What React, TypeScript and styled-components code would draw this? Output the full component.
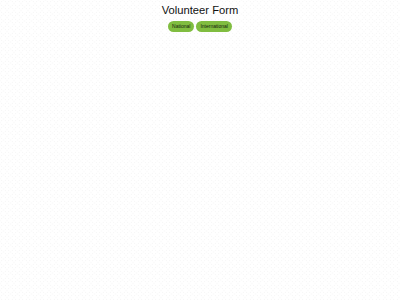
import styled, { createGlobalStyle } from 'styled-components';

const GlobalStyle = createGlobalStyle`
  html, body {
    margin: 0;
    padding: 0;
    height: 100%;
  }
  body {
    font-family: 'Liberation Sans', Arial, sans-serif;
    background-color: #ffffff;
    background-image: radial-gradient(circle at 50% 50%, transparent 2.2px, #f3f3f3 2.6px, transparent 3.2px);
    background-size: 7px 7px;
  }
`;

const Page = styled.main`
  display: flex;
  flex-direction: column;
  align-items: center;
  min-height: 300px;
  padding-top: 2px;
`;

const Title = styled.h1`
  margin: 0;
  font-family: 'Liberation Sans', Arial, sans-serif;
  font-size: 11.2px;
  font-weight: 400;
  color: #111;
  line-height: 17px;
`;

const ButtonRow = styled.div`
  display: flex;
  gap: 2px;
  margin-top: 2px;
`;

const TabButton = styled.button`
  height: 11px;
  padding: 0 4px;
  border: none;
  border-radius: 6px;
  background: #80bd40;
  color: #14200c;
  font-family: 'Liberation Sans', Arial, sans-serif;
  font-size: 5px;
  line-height: 11px;
  cursor: pointer;
`;

const App = () => {
  return (
    <>
      <GlobalStyle />
      <Page>
        <Title>Volunteer Form</Title>
        <ButtonRow>
          <TabButton type="button">National</TabButton>
          <TabButton type="button">International</TabButton>
        </ButtonRow>
      </Page>
    </>
  );
};

export default App;
